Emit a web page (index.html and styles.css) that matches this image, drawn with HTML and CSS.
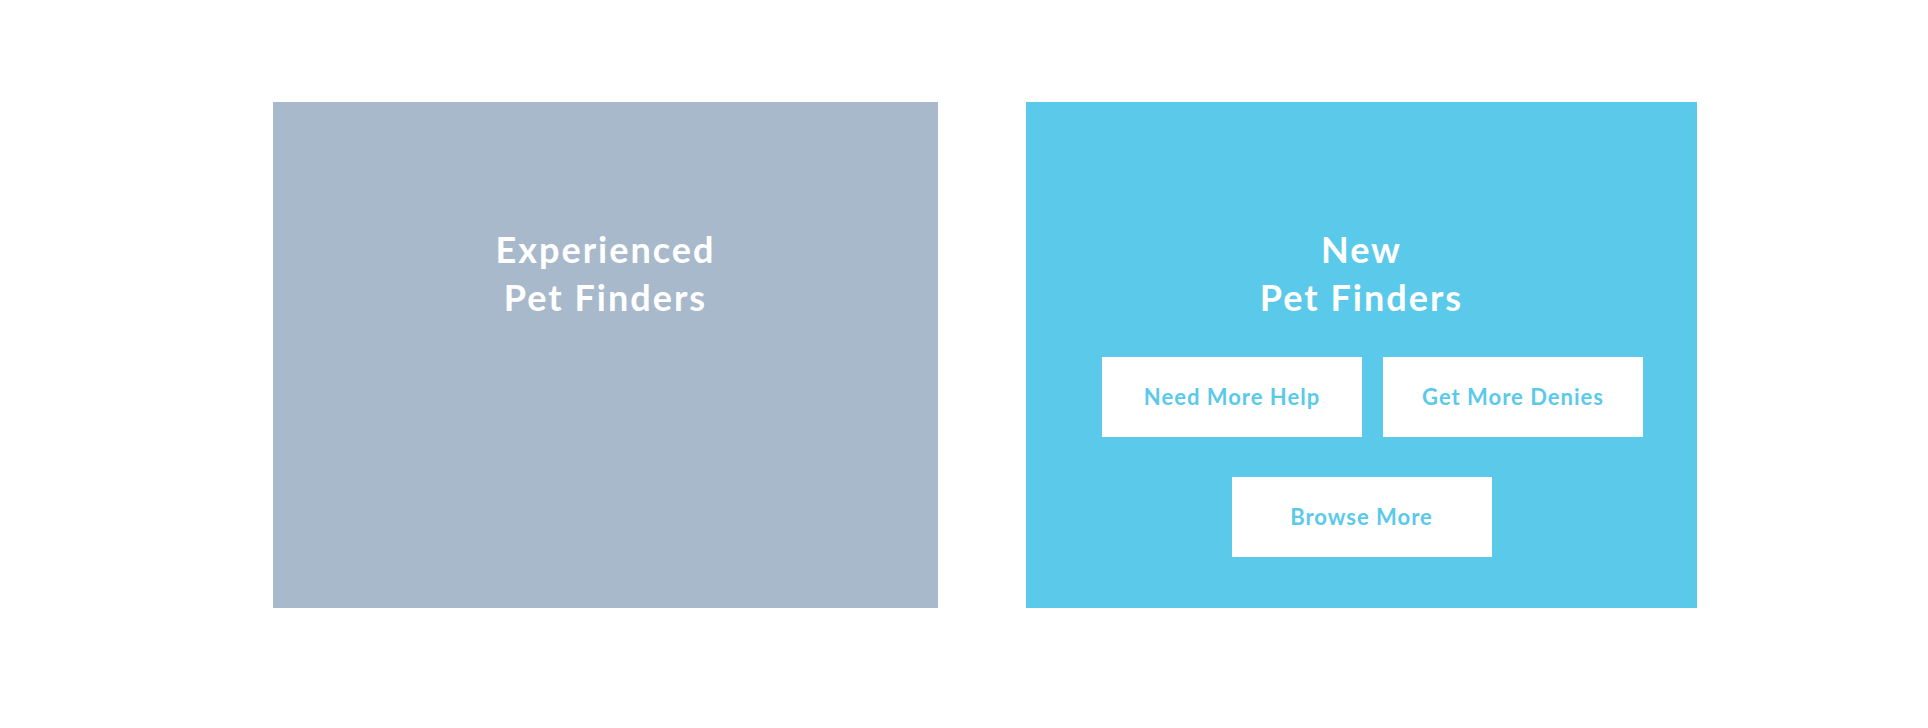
FILE: index.html
```html
<html>
<head>
<meta charset="utf-8">
<link rel="stylesheet" href="styles.css">
</head>
<body>
<div class="finders">
	<div class="card experienced">
		<h2>Experienced<br>Pet Finders</h2>
	</div>
	<div class="card new">
		<h2>New<br>Pet Finders</h2>
		<div class="buttons top_row">
			<a class="btn" href="#">Need More Help</a>
			<a class="btn" href="#">Get More Denies</a>
		</div>
		<div class="buttons">
			<a class="btn" href="#">Browse More</a>
		</div>
	</div>
</div>
</body>
</html>
```

FILE: styles.css
```css
body {
	margin: 0;
	background-color: white;
	font-family: 'Lato', 'Open Sans', sans-serif;
}

.finders {
	display: flex;
	gap: 88px;
	padding: 102px 0 0 273px;
}

.card {
	height: 506px;
	box-sizing: border-box;
	padding-top: 123px;
	display: flex;
	flex-direction: column;
	align-items: center;
}
.experienced {
	width: 665px;
	background-color: #a8b9cc;
}
.new {
	width: 671px;
	background-color: #5bc9e9;
}

h2 {
	margin: 0;
	color: white;
	font-size: 36px;
	line-height: 48px;
	font-weight: 700;
	letter-spacing: 2px;
	text-align: center;
}

.buttons {
	display: flex;
	gap: 21px;
	margin-top: 40px;
}
.top_row {
	margin-top: 36px;
	padding-left: 22px;
}

.btn {
	display: block;
	width: 260px;
	height: 80px;
	line-height: 80px;
	background-color: white;
	color: #5bc9e9;
	font-size: 22px;
	font-weight: 700;
	letter-spacing: 1px;
	text-align: center;
	text-decoration: none;
}
```
